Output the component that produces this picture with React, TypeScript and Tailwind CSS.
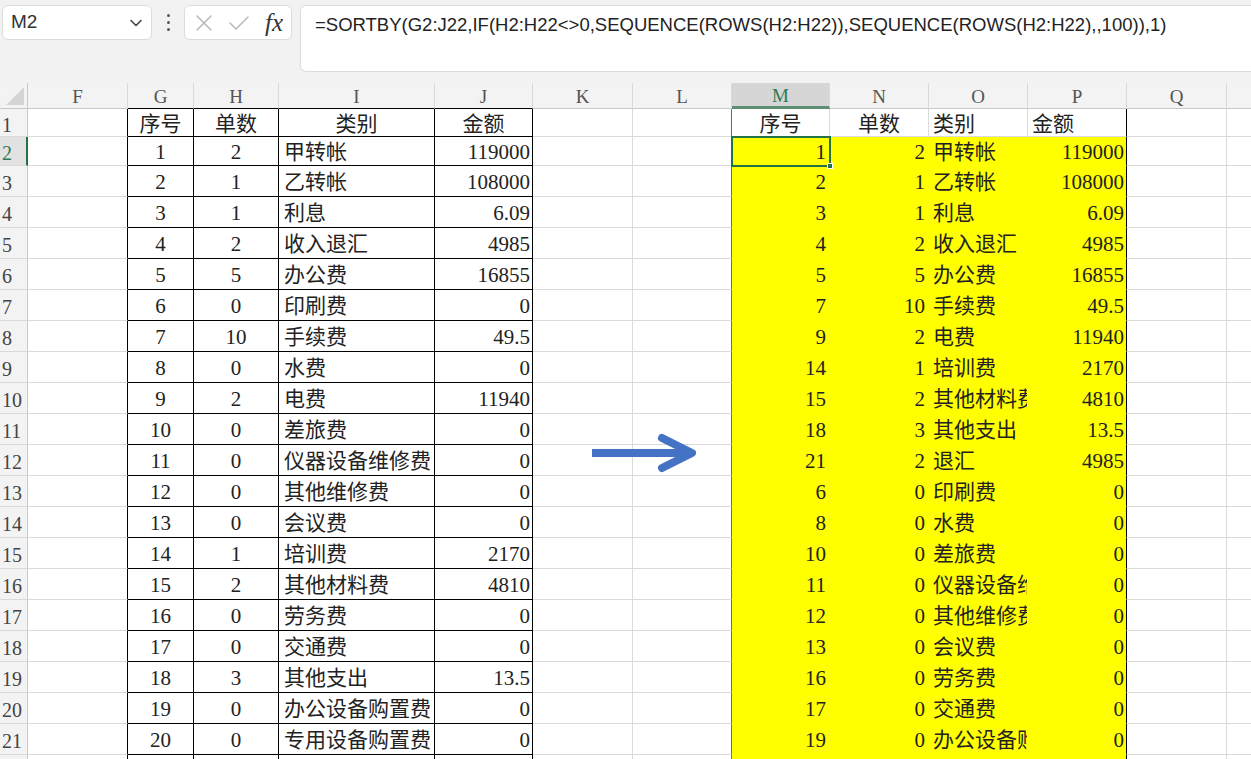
import React from 'react';

type Col = { key: string; w: string };

const COLS: Col[] = [
  { key: 'F', w: 'w-[100px]' },
  { key: 'G', w: 'w-[66px]' },
  { key: 'H', w: 'w-[85px]' },
  { key: 'I', w: 'w-[156px]' },
  { key: 'J', w: 'w-[98px]' },
  { key: 'K', w: 'w-[100px]' },
  { key: 'L', w: 'w-[99px]' },
  { key: 'M', w: 'w-[98px]' },
  { key: 'N', w: 'w-[99px]' },
  { key: 'O', w: 'w-[99px]' },
  { key: 'P', w: 'w-[99px]' },
  { key: 'Q', w: 'w-[100px]' },
  { key: 'R', w: 'w-[100px]' },
];

// source table G:J
const LEFT: [string, string, string, string][] = [
  ['1', '2', '甲转帐', '119000'],
  ['2', '1', '乙转帐', '108000'],
  ['3', '1', '利息', '6.09'],
  ['4', '2', '收入退汇', '4985'],
  ['5', '5', '办公费', '16855'],
  ['6', '0', '印刷费', '0'],
  ['7', '10', '手续费', '49.5'],
  ['8', '0', '水费', '0'],
  ['9', '2', '电费', '11940'],
  ['10', '0', '差旅费', '0'],
  ['11', '0', '仪器设备维修费', '0'],
  ['12', '0', '其他维修费', '0'],
  ['13', '0', '会议费', '0'],
  ['14', '1', '培训费', '2170'],
  ['15', '2', '其他材料费', '4810'],
  ['16', '0', '劳务费', '0'],
  ['17', '0', '交通费', '0'],
  ['18', '3', '其他支出', '13.5'],
  ['19', '0', '办公设备购置费', '0'],
  ['20', '0', '专用设备购置费', '0'],
  ['', '', '', ''],
];

// spilled SORTBY result M:P
const RIGHT: [string, string, string, string][] = [
  ['1', '2', '甲转帐', '119000'],
  ['2', '1', '乙转帐', '108000'],
  ['3', '1', '利息', '6.09'],
  ['4', '2', '收入退汇', '4985'],
  ['5', '5', '办公费', '16855'],
  ['7', '10', '手续费', '49.5'],
  ['9', '2', '电费', '11940'],
  ['14', '1', '培训费', '2170'],
  ['15', '2', '其他材料费', '4810'],
  ['18', '3', '其他支出', '13.5'],
  ['21', '2', '退汇', '4985'],
  ['6', '0', '印刷费', '0'],
  ['8', '0', '水费', '0'],
  ['10', '0', '差旅费', '0'],
  ['11', '0', '仪器设备维修费', '0'],
  ['12', '0', '其他维修费', '0'],
  ['13', '0', '会议费', '0'],
  ['16', '0', '劳务费', '0'],
  ['17', '0', '交通费', '0'],
  ['19', '0', '办公设备购置费', '0'],
  ['', '', '', ''],
];

const ROW_H = (r: number) => (r === 1 ? 'h-[28px]' : r === 2 ? 'h-[29px]' : 'h-[31px]');

const FORMULA = '=SORTBY(G2:J22,IF(H2:H22<>0,SEQUENCE(ROWS(H2:H22)),SEQUENCE(ROWS(H2:H22),,100)),1)';

const cellFont = "font-['Liberation_Serif','Noto_Sans_CJK_SC',serif] text-[21px] text-[#222]";

const Cell: React.FC<{ col: Col; row: number; text?: string; align?: string; extra?: string }> = ({
  col,
  row,
  text,
  align = 'justify-start',
  extra = '',
}) => (
  <div
    className={`${col.w} ${ROW_H(row)} shrink-0 flex items-center pt-[4px] overflow-hidden whitespace-nowrap border-r border-b ${align} ${extra}`}
  >
    {text}
  </div>
);

function renderRow(r: number) {
  const grid = 'border-[#dadada]';
  const left = r === 1 ? ['序号', '单数', '类别', '金额'] : LEFT[r - 2];
  const right = r === 1 ? ['序号', '单数', '类别', '金额'] : RIGHT[r - 2];
  const yellow = r >= 2;
  const fill = yellow ? 'bg-[#ffff00] border-transparent' : 'border-[#dadada]';

  return COLS.map(col => {
    const k = col.key;
    if (k === 'F') return <Cell key={k} col={col} row={r} extra="border-r-black border-b-[#dadada]" />;
    if (k === 'G' || k === 'H') {
      const t = k === 'G' ? left[0] : left[1];
      return <Cell key={k} col={col} row={r} text={t} align="justify-center" extra="border-black" />;
    }
    if (k === 'I')
      return <Cell key={k} col={col} row={r} text={left[2]} align={r === 1 ? 'justify-center' : 'justify-start pl-[5px]'} extra="border-black" />;
    if (k === 'J')
      return <Cell key={k} col={col} row={r} text={left[3]} align={r === 1 ? 'justify-center' : 'justify-end pr-[2px]'} extra="border-black" />;
    if (k === 'K') return <Cell key={k} col={col} row={r} extra={grid} />;
    if (k === 'L') return <Cell key={k} col={col} row={r} extra="border-r-[#6b6b6b] border-b-[#dadada]" />;
    if (k === 'M')
      return <Cell key={k} col={col} row={r} text={right[0]} align={r === 1 ? 'justify-center' : 'justify-end pr-[3px]'} extra={fill} />;
    if (k === 'N')
      return <Cell key={k} col={col} row={r} text={right[1]} align={r === 1 ? 'justify-center' : 'justify-end pr-[3px]'} extra={fill} />;
    if (k === 'O') return <Cell key={k} col={col} row={r} text={right[2]} align="justify-start pl-[4px]" extra={fill} />;
    if (k === 'P')
      return (
        <Cell key={k} col={col} row={r} text={right[3]} align={r === 1 ? 'justify-start pl-[4px]' : 'justify-end pr-[2px]'}
          extra={yellow ? 'bg-[#ffff00] border-b-transparent border-r-black' : 'border-b-[#dadada] border-r-black'} />
      );
    return <Cell key={k} col={col} row={r} extra={grid} />;
  });
}

const RowHeader: React.FC<{ r: number }> = ({ r }) => {
  const active = r === 2;
  return (
    <div
      className={`w-[28px] ${ROW_H(r)} shrink-0 flex items-center pt-[4px] pl-[2px] border-b border-[#dadada] font-['Liberation_Serif',serif] text-[20px] ${
        active
          ? 'bg-[#e2e2e2] text-[#2f7a52] border-r-2 border-r-[#217346]'
          : 'bg-[#f3f3f3] text-[#444] border-r border-r-[#c8c8c8]'
      }`}
    >
      {r}
    </div>
  );
};

function Toolbar() {
  return (
    <div className="h-[83px] bg-[#f2f2f2] flex items-start pt-[5px] pl-[2px]">
      <div className="w-[150px] h-[35px] bg-white border border-[#dcdcdc] rounded-[6px] flex items-center justify-between pl-[8px] pr-[8px]">
        <span className="font-['Liberation_Sans',sans-serif] text-[19px] text-[#333]">M2</span>
        <svg width="14" height="10" viewBox="0 0 14 10">
          <path d="M2 2.5 L7 7.5 L12 2.5" fill="none" stroke="#444" strokeWidth="1.6" strokeLinecap="round" strokeLinejoin="round" />
        </svg>
      </div>
      <div className="w-[32px] h-[35px] flex flex-col items-center justify-center gap-[4px]">
        <span className="w-[3px] h-[3px] bg-[#555] rounded-full" />
        <span className="w-[3px] h-[3px] bg-[#555] rounded-full" />
        <span className="w-[3px] h-[3px] bg-[#555] rounded-full" />
      </div>
      <div className="w-[108px] h-[35px] bg-white border border-[#dcdcdc] rounded-[6px] flex items-center pl-[10px] pr-[6px] justify-between">
        <svg width="18" height="18" viewBox="0 0 18 18">
          <path d="M2 2 L16 16 M16 2 L2 16" stroke="#b8b8b8" strokeWidth="1.5" strokeLinecap="round" />
        </svg>
        <svg width="22" height="18" viewBox="0 0 22 18">
          <path d="M2 9 L8 15 L20 3" fill="none" stroke="#b8b8b8" strokeWidth="1.5" strokeLinecap="round" strokeLinejoin="round" />
        </svg>
        <span className="font-['Liberation_Serif',serif] italic text-[25px] leading-none text-[#333] pr-[2px]">fx</span>
      </div>
      <div className="ml-[8px] flex-1 h-[67px] bg-white border border-[#dcdcdc] border-r-0 rounded-l-[6px] pl-[14px] pt-[5px]">
        <span className="font-['Liberation_Sans',sans-serif] text-[18.5px] text-[#222] whitespace-nowrap">{FORMULA}</span>
      </div>
    </div>
  );
}

function ColumnHeaders() {
  return (
    <div className="flex h-[26px]">
      <div className="w-[28px] shrink-0 bg-[#f3f3f3] border-r border-b border-[#c8c8c8] flex items-end justify-end p-[3px]">
        <svg width="18" height="18" viewBox="0 0 18 18">
          <polygon points="18,0 18,18 0,18" fill="#d4d4d4" />
        </svg>
      </div>
      {COLS.map(col => {
        const active = col.key === 'M';
        const tableCol = ['G', 'H', 'I', 'J'].includes(col.key);
        return (
          <div
            key={col.key}
            className={`${col.w} shrink-0 flex items-center justify-center pt-[3px] font-['Liberation_Serif',serif] text-[19px] border-r border-r-[#dadada] ${
              active
                ? 'bg-[#d6d6d6] text-[#2f7a52] border-b-[3px] border-b-[#5d8f72]'
                : tableCol
                ? 'bg-[#f3f3f3] text-[#555] border-b border-b-black'
                : 'bg-[#f3f3f3] text-[#555] border-b border-b-[#c8c8c8]'
            }`}
          >
            {col.key === 'R' ? '' : col.key}
          </div>
        );
      })}
    </div>
  );
}

export default function App() {
  const rows = Array.from({ length: 22 }, (_, i) => i + 1);
  return (
    <div className="relative w-[1251px] h-[759px] overflow-hidden bg-white">
      <Toolbar />
      <ColumnHeaders />
      <div className={cellFont}>
        {rows.map(r => (
          <div key={r} className="flex">
            <RowHeader r={r} />
            {renderRow(r)}
          </div>
        ))}
      </div>

      {/* active cell M2 */}
      <div className="absolute left-[731px] top-[136px] w-[100px] h-[31px] border-2 border-[#217346] pointer-events-none">
        <span className="absolute -right-[4px] -bottom-[4px] w-[6px] h-[6px] bg-[#217346] border border-white" />
      </div>

      <svg className="absolute left-[580px] top-[425px]" width="130" height="60" viewBox="580 425 130 60">
        <path d="M592 453 L688 453" stroke="#4472c4" strokeWidth="8" strokeLinecap="butt" />
        <path d="M662 438 L692 453 L662 468" fill="none" stroke="#4472c4" strokeWidth="8" strokeLinecap="round" strokeLinejoin="round" />
      </svg>
    </div>
  );
}
